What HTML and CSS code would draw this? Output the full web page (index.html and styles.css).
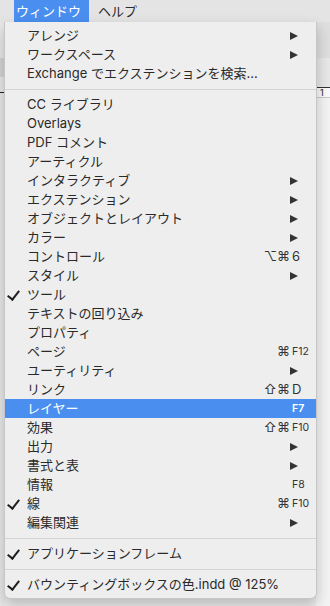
FILE: index.html
```html
<!DOCTYPE html>
<html>
<head>
    <meta name="viewport" content="width=device-width,initial-scale=1.0">
    <title>ウィンドウ メニュー</title>
    <link rel="stylesheet" href="styles.css">
</head>
<body>
    <div class="menubar">
        <span class="menubar-item active">ウィンドウ</span>
        <span class="menubar-item">ヘルプ</span>
    </div>

    <div class="workspace">
        <div class="app-left">
            <div class="strip-dark"></div>
            <div class="mark"></div>
        </div>
        <div class="app-right">
            <div class="panel-top"></div>
            <div class="panel-mid"></div>
            <div class="ruler"><span>1</span></div>
        </div>

        <div class="menu">
            <div class="row"><span class="label">アレンジ</span><span class="arrow"></span></div>
            <div class="row"><span class="label">ワークスペース</span><span class="arrow"></span></div>
            <div class="row"><span class="label">Exchange でエクステンションを検索...</span></div>
            <div class="sep"></div>
            <div class="row"><span class="label">CC ライブラリ</span></div>
            <div class="row"><span class="label">Overlays</span></div>
            <div class="row"><span class="label">PDF コメント</span></div>
            <div class="row"><span class="label">アーティクル</span></div>
            <div class="row"><span class="label">インタラクティブ</span><span class="arrow"></span></div>
            <div class="row"><span class="label">エクステンション</span><span class="arrow"></span></div>
            <div class="row"><span class="label">オブジェクトとレイアウト</span><span class="arrow"></span></div>
            <div class="row"><span class="label">カラー</span><span class="arrow"></span></div>
            <div class="row"><span class="label">コントロール</span><span class="mods">⌥⌘</span><span class="key">6</span></div>
            <div class="row"><span class="label">スタイル</span><span class="arrow"></span></div>
            <div class="row checked"><span class="label">ツール</span></div>
            <div class="row"><span class="label">テキストの回り込み</span></div>
            <div class="row"><span class="label">プロパティ</span></div>
            <div class="row"><span class="label">ページ</span><span class="mods">⌘</span><span class="key fkey">F12</span></div>
            <div class="row"><span class="label">ユーティリティ</span><span class="arrow"></span></div>
            <div class="row"><span class="label">リンク</span><span class="mods">⇧⌘</span><span class="key">D</span></div>
            <div class="row selected"><span class="label">レイヤー</span><span class="key fkey">F7</span></div>
            <div class="row"><span class="label">効果</span><span class="mods">⇧⌘</span><span class="key fkey">F10</span></div>
            <div class="row"><span class="label">出力</span><span class="arrow"></span></div>
            <div class="row"><span class="label">書式と表</span><span class="arrow"></span></div>
            <div class="row"><span class="label">情報</span><span class="key fkey">F8</span></div>
            <div class="row checked"><span class="label">線</span><span class="mods">⌘</span><span class="key fkey">F10</span></div>
            <div class="row"><span class="label">編集関連</span><span class="arrow"></span></div>
            <div class="sep"></div>
            <div class="row checked"><span class="label">アプリケーションフレーム</span></div>
            <div class="sep"></div>
            <div class="row checked"><span class="label">バウンティングボックスの色.indd @ 125%</span></div>
        </div>
    </div>
</body>
</html>
```

FILE: styles.css
```css
* {
    margin: 0;
    padding: 0;
    box-sizing: border-box;
}

body {
    width: 330px;
    height: 606px;
    overflow: hidden;
    background: #ececec;
    font-family: "Inter", "Noto Sans CJK JP", sans-serif;
    font-size: 13px;
    color: #2a2a2a;
}

.menubar {
    height: 22px;
    display: flex;
    padding-left: 14px;
    background: #e4e4e4;
}

.menubar-item {
    padding: 0 8px 0 9px;
    line-height: 22px;
    font-size: 13px;
    white-space: nowrap;
}

.menubar-item.active {
    padding: 0 8px 0 2px;
    background: #4a8ff0;
    color: #fff;
}

.workspace {
    position: relative;
    height: 584px;
    display: flex;
    justify-content: space-between;
}

/* app behind the menu */
.app-left {
    width: 5px;
    display: flex;
    flex-direction: column;
    padding-top: 36px;
    background: #e8e8e8;
}

.strip-dark {
    height: 19px;
    background: #d4d4d4;
}

.mark {
    width: 5px;
    height: 1px;
    margin-top: 15px;
    background: #222;
}

.app-right {
    width: 14px;
    display: flex;
    flex-direction: column;
    background: #f3f3f3;
}

.panel-top {
    height: 36px;
    background: #dedede;
}

.panel-mid {
    height: 30px;
    background: #e7e7e7;
    border-bottom: 1px solid #333;
}

.ruler {
    height: 10px;
    padding-left: 4px;
    font-size: 9px;
    line-height: 10px;
    color: #222;
    background: #fafafa;
    border-bottom: 1px solid #c9c9c9;
}

.menu {
    position: absolute;
    top: 0;
    left: 4px;
    width: 313px;
    padding: 4px 0;
    background: #eeeeee;
    border: 1px solid #c6c6c6;
    border-top: none;
    border-radius: 0 0 6px 6px;
    box-shadow: 0 6px 14px rgba(0, 0, 0, 0.22);
}

.row {
    height: 19px;
    display: grid;
    grid-template-columns: 1fr auto 24px;
    align-items: center;
    padding-left: 22px;
    line-height: 19px;
    position: relative;
    white-space: nowrap;
}

.label {
    grid-column: 1;
}

.mods {
    grid-column: 2;
    padding-right: 2px;
    font-size: 13px;
    color: #333;
}

.key {
    grid-column: 3;
    font-size: 13px;
    color: #333;
}

.fkey {
    font-size: 10.5px;
}

.arrow {
    grid-column: 3;
    width: 0;
    height: 0;
    margin-left: -2px;
    border-top: 4.5px solid transparent;
    border-bottom: 4.5px solid transparent;
    border-left: 8px solid #333;
}

/* check mark drawn as a rotated corner */
.checked::before {
    content: "";
    position: absolute;
    left: 5px;
    top: 3px;
    width: 5px;
    height: 10px;
    border-right: 2.2px solid #1e1e1e;
    border-bottom: 2.2px solid #1e1e1e;
    transform: rotate(38deg);
}

.selected {
    background: #4a8ff0;
    color: #fff;
}

.selected .key {
    color: #fff;
    font-weight: 600;
}

.sep {
    height: 12px;
    display: flex;
    align-items: center;
}

.sep::after {
    content: "";
    width: 100%;
    height: 1px;
    background: #d3d3d3;
}
```
